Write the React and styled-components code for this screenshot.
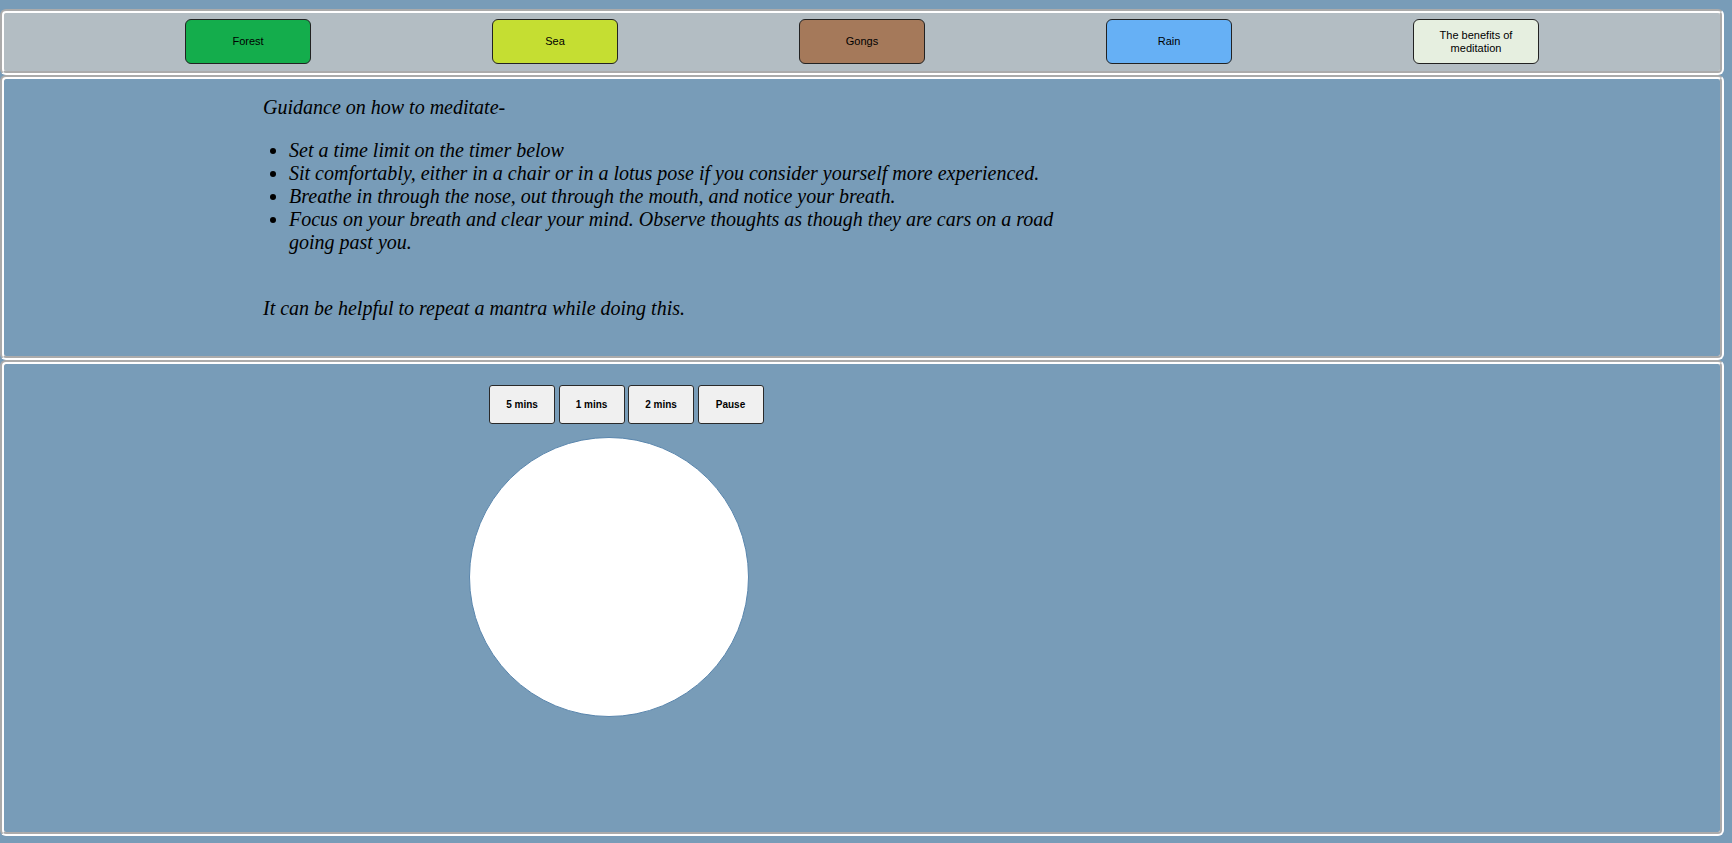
import React from "react";
import styled, { createGlobalStyle } from "styled-components";

const Global = createGlobalStyle`
  html, body { margin: 0; padding: 0; }
  body {
    background: #789cb8;
    font-family: "Liberation Serif", "Times New Roman", serif;
    padding-top: 9px;
  }
`;

const Panel = styled.section`
  box-sizing: border-box;
  width: 1724px;
  border: 4px groove #ffffff;
  border-radius: 6px;
  background: ${(p) => p.$bg || "#789cb8"};
`;

const NavBar = styled(Panel)`
  display: flex;
  justify-content: space-evenly;
  align-items: center;
  padding: 6px 0 7px;
`;

const NavButton = styled.button`
  box-sizing: border-box;
  width: 126px;
  height: 45px;
  border: 1px solid #222;
  border-radius: 6px;
  background: ${(p) => p.$color};
  font-family: "Liberation Sans", Arial, sans-serif;
  font-size: 11px;
  color: #000;
  padding: 0 14px;
  line-height: 1.15;
`;

const Guide = styled(Panel)`
  padding: 17px 0 36px 259px;
`;

const GuideText = styled.div`
  width: 810px;
  font-size: 20px;
  font-style: italic;
  line-height: 23px;
  color: #000;
`;

const Para = styled.p`
  margin: ${(p) => p.$mt || 0} 0 0 0;
`;

const List = styled.ul`
  margin: 20px 0 0 0;
  padding-left: 26px;
  list-style: disc;
`;

const TimerPanel = styled(Panel)`
  height: 476px;
  padding: 21px 0 0 465px;
  display: flex;
  flex-direction: column;
  align-items: flex-start;
`;

const TimerRow = styled.div`
  display: flex;
  gap: 3.5px;
  margin-left: 20px;
`;

const TimerButton = styled.button`
  box-sizing: border-box;
  width: 66px;
  height: 39px;
  border: 1px solid #2a2a2a;
  border-radius: 3px;
  background: #f0f0f0;
  font-family: "Liberation Sans", Arial, sans-serif;
  font-size: 10px;
  font-weight: bold;
  color: #000;
  padding: 0;
`;

const Circle = styled.div`
  box-sizing: border-box;
  width: 280px;
  height: 280px;
  margin-top: 13px;
  border-radius: 50%;
  background: #ffffff;
  border: 1px solid #5a86ad;
`;

const sounds = [
  { label: "Forest", color: "#14ad4c" },
  { label: "Sea", color: "#c5de32" },
  { label: "Gongs", color: "#a5795a" },
  { label: "Rain", color: "#66b0f5" },
  { label: "The benefits of meditation", color: "#e6efe0" },
];

const tips = [
  "Set a time limit on the timer below",
  "Sit comfortably, either in a chair or in a lotus pose if you consider yourself more experienced.",
  "Breathe in through the nose, out through the mouth, and notice your breath.",
  "Focus on your breath and clear your mind. Observe thoughts as though they are cars on a road going past you.",
];

export default function App() {
  return (
    <>
      <Global />
      <NavBar $bg="#b3bdc3">
        {sounds.map((s) => (
          <NavButton key={s.label} $color={s.color}>
            {s.label}
          </NavButton>
        ))}
      </NavBar>
      <Guide>
        <GuideText>
          <Para>Guidance on how to meditate-</Para>
          <List>
            {tips.map((t) => (
              <li key={t}>{t}</li>
            ))}
          </List>
          <Para $mt="43px">It can be helpful to repeat a mantra while doing this.</Para>
        </GuideText>
      </Guide>
      <TimerPanel>
        <TimerRow>
          <TimerButton>5 mins</TimerButton>
          <TimerButton>1 mins</TimerButton>
          <TimerButton>2 mins</TimerButton>
          <TimerButton>Pause</TimerButton>
        </TimerRow>
        <Circle />
      </TimerPanel>
    </>
  );
}
